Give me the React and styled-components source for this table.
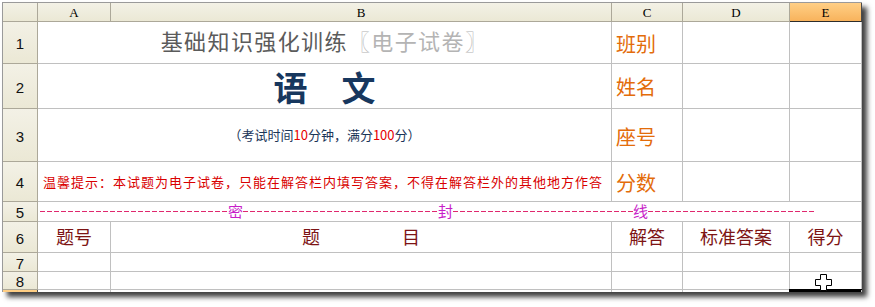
import React from 'react';
import styled, { createGlobalStyle } from 'styled-components';

const Global = createGlobalStyle`
  *, *::before, *::after { box-sizing: border-box; }
  html, body { margin: 0; padding: 0; background: #fff; }
  body {
    width: 875px;
    height: 307px;
    overflow: hidden;
    font-family: "Noto Sans CJK SC", sans-serif;
  }
`;

const Frame = styled.div`
  padding: 2px 0 0 2px;
`;

const Sheet = styled.div`
  position: relative;
  width: 860px;
  height: 290px;
  border-top: 1px solid #9a9a9a;
  border-left: 1px solid #9a9a9a;
  background: #fff;
  overflow: hidden;
  box-shadow: 5px 5px 5px rgba(0, 0, 0, 0.75);
`;

const Grid = styled.div`
  display: grid;
  grid-template-columns: 35px 73px 501px 71px 107px 72px;
  grid-template-rows: 19px 42px 45px 53px 40px 20px 31px 19px 18px 20px;
`;

const Head = styled.div`
  display: flex;
  align-items: center;
  justify-content: center;
  background: ${p => (p.$on ? 'linear-gradient(#ffcf86, #f8b35c)' : 'linear-gradient(#f3f1e6, #ebe8d5)')};
  border-right: 1px solid ${p => (p.$on ? '#4a4a4a' : '#aca899')};
  border-bottom: 1px solid ${p => (p.$on ? '#2c2c2c' : '#aca899')};
  font: 13px "Liberation Serif", serif;
  color: #000;
  line-height: 1;
  padding-top: 1px;
`;

const RowHead = styled(Head)`
  font: 15px "Liberation Sans", sans-serif;
  color: #111;
  padding-top: 2px;
`;

const Cell = styled.div`
  grid-column: ${p => (p.$span ? `span ${p.$span}` : 'auto')};
  display: flex;
  align-items: center;
  justify-content: ${p => p.$align || 'center'};
  padding: ${p => p.$pad || '0'};
  border-right: 1px solid #c0c0c0;
  border-bottom: 1px solid #c0c0c0;
  min-width: 0;
  white-space: nowrap;
  box-shadow: ${p => (p.$active ? 'inset 0 0 0 2px #000, 0 0 0 1px #000' : 'none')};
`;

const Title = styled.div`
  font-size: 22px;
  letter-spacing: 1.4px;
  line-height: 1.2;
  color: ${p => p.$color};
`;

const Subject = styled.div`
  font-size: 34px;
  font-weight: 700;
  line-height: 1.2;
  color: #17375e;
`;

const Note = styled.div`
  font-size: 13px;
  line-height: 1.2;
  color: #1b3558;
`;

const Num = styled.span`
  color: #e60000;
`;

const Warning = styled.div`
  font-size: 13px;
  letter-spacing: 1px;
  line-height: 1.2;
  color: #d90000;
`;

const Label = styled.div`
  font-size: 20px;
  line-height: 1.2;
  color: #e36c0a;
`;

const HeadText = styled.div`
  display: flex;
  gap: ${p => p.$gap || 0}px;
  font-size: 18px;
  line-height: 1.2;
  color: #7d1414;
`;

const Dash = styled.span`
  flex: none;
  width: ${p => p.$w}px;
  height: 1px;
  background: repeating-linear-gradient(to right, #e0286e 0 5px, transparent 5px 7px);
`;

const SealChar = styled.span`
  flex: none;
  font-size: 15px;
  line-height: 1.1;
  color: #c81ec8;
`;

const Cursor = styled.svg`
  position: absolute;
  left: 812px;
  top: 271px;
  width: 17px;
  height: 17px;
`;

export default function App() {
  const cols = ['A', 'B', 'C', 'D', 'E'];
  return (
    <Frame>
      <Global />
      <Sheet>
        <Grid>
          <Head />
          {cols.map(c => (
            <Head key={c} $on={c === 'E'}>{c}</Head>
          ))}

          <RowHead>1</RowHead>
          <Cell $span={2} $pad="0 0 4px 0">
            <Title $color="#5b5b5b">基础知识强化训练</Title>
            <Title $color="#b4b4b4">〖电子试卷〗</Title>
          </Cell>
          <Cell $align="flex-start" $pad="2px 0 0 4px"><Label>班别</Label></Cell>
          <Cell />
          <Cell />

          <RowHead>2</RowHead>
          <Cell $span={2} $pad="2px 0 0 0">
            <Subject>语　文</Subject>
          </Cell>
          <Cell $align="flex-start" $pad="2px 0 0 4px"><Label>姓名</Label></Cell>
          <Cell />
          <Cell />

          <RowHead>3</RowHead>
          <Cell $span={2}>
            <Note>（考试时间<Num>10</Num>分钟，满分<Num>100</Num>分）</Note>
          </Cell>
          <Cell $align="flex-start" $pad="4px 0 0 4px"><Label>座号</Label></Cell>
          <Cell />
          <Cell />

          <RowHead>4</RowHead>
          <Cell $span={2} $align="flex-start" $pad="0 0 0 5px">
            <Warning>温馨提示：本试题为电子试卷，只能在解答栏内填写答案，不得在解答栏外的其他地方作答</Warning>
          </Cell>
          <Cell $align="flex-start" $pad="3px 0 0 4px"><Label>分数</Label></Cell>
          <Cell />
          <Cell />

          <RowHead>5</RowHead>
          <Cell $span={5} $align="flex-start" $pad="0 0 0 2px">
            <Dash $w={188} />
            <SealChar>密</SealChar>
            <Dash $w={195} />
            <SealChar>封</SealChar>
            <Dash $w={180} />
            <SealChar>线</SealChar>
            <Dash $w={168} />
          </Cell>

          <RowHead>6</RowHead>
          <Cell><HeadText>题号</HeadText></Cell>
          <Cell><HeadText $gap={82}><span>题</span><span>目</span></HeadText></Cell>
          <Cell><HeadText>解答</HeadText></Cell>
          <Cell><HeadText>标准答案</HeadText></Cell>
          <Cell><HeadText>得分</HeadText></Cell>

          <RowHead>7</RowHead>
          <Cell /><Cell /><Cell /><Cell /><Cell />

          <RowHead>8</RowHead>
          <Cell /><Cell /><Cell /><Cell /><Cell />

          <RowHead $on />
          <Cell /><Cell /><Cell /><Cell /><Cell $active />
        </Grid>
        <Cursor viewBox="0 0 17 17">
          <path
            d="M5.5 0.5 H11.5 V5.5 H16.5 V11.5 H11.5 V16.5 H5.5 V11.5 H0.5 V5.5 H5.5 Z"
            fill="#fff"
            stroke="#000"
            strokeWidth="1"
          />
        </Cursor>
      </Sheet>
    </Frame>
  );
}
